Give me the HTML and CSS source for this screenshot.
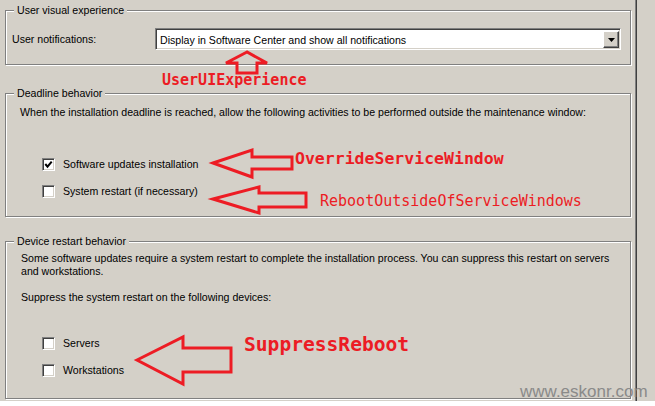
FILE: index.html
```html
<!DOCTYPE html>
<html lang="en">
<head>
    <meta charset="UTF-8">
    <title>Software Updates - User Experience</title>
    <link rel="stylesheet" href="styles.css">
</head>
<body>

    <div class="dialog">
        <div class="panel">

            <!-- User visual experience -->
            <fieldset class="group group-visual">
                <legend>User visual experience</legend>
                <div class="field-row">
                    <span class="field-label">User notifications:</span>
                    <div class="combo">
                        <span class="combo-value">Display in Software Center and show all notifications</span>
                        <span class="combo-button">
                            <svg width="7" height="4" viewBox="0 0 7 4"><polygon points="0,0 7,0 3.5,4" fill="#000"/></svg>
                        </span>
                    </div>
                </div>
            </fieldset>

            <!-- Deadline behavior -->
            <fieldset class="group group-deadline">
                <legend>Deadline behavior</legend>
                <p class="note">When the installation deadline is reached, allow the following activities to be performed outside the maintenance window:</p>
                <div class="options">
                    <label class="option">
                        <span class="check">
                            <svg width="11" height="11" viewBox="0 0 11 11"><polyline points="2.3,5 4.5,7.6 8.7,2.6" fill="none" stroke="#000" stroke-width="2"/></svg>
                        </span>
                        Software updates installation
                    </label>
                    <label class="option"><span class="check"></span>System restart (if necessary)</label>
                </div>
            </fieldset>

            <!-- Device restart behavior -->
            <fieldset class="group group-restart">
                <legend>Device restart behavior</legend>
                <p class="note">Some software updates require a system restart to complete the installation process. You can suppress this restart on servers<br>and workstations.</p>
                <p class="note note-gap">Suppress the system restart on the following devices:</p>
                <div class="options">
                    <label class="option"><span class="check"></span>Servers</label>
                    <label class="option"><span class="check"></span>Workstations</label>
                </div>
            </fieldset>

        </div>

        <!-- Red notes drawn over the dialog -->
        <svg class="notes" width="655" height="401" viewBox="0 0 655 401">
            <g class="arrow">
                <polygon points="247,52 226,63 237,63 237,73 257,73 257,63 267,63"/>
                <polygon points="213,163 252,150 252,157 292,157 292,169 252,169 252,177"/>
                <polygon points="213,199 259,187 259,193 306,193 306,207 259,207 259,213"/>
                <polygon points="137,360 183,337 183,348 231,348 231,372 183,372 183,384"/>
            </g>
            <text class="tag tag-bold" x="162" y="85" font-size="15">UserUIExperience</text>
            <text class="tag tag-bold" x="295" y="164" font-size="16.5">OverrideServiceWindow</text>
            <text class="tag" x="320" y="206" font-size="15">RebootOutsideOfServiceWindows</text>
            <text class="tag tag-bold" x="244" y="351" font-size="19.6">SuppressReboot</text>
            <text class="watermark" x="520" y="397">www.eskonr.com</text>
        </svg>
    </div>

</body>
</html>
```

FILE: styles.css
```css
* {
    margin: 0;
    padding: 0;
    box-sizing: border-box;
}

body {
    background: #fff;
    font-family: "Liberation Sans", Arial, sans-serif;
    font-size: 10.6px;
    color: #000;
}

/* Dialog window */
.dialog {
    position: relative;
    width: 655px;
    height: 401px;
    background-color: #d4d0c8;
    box-shadow: 0 1px 3px rgba(0, 0, 0, 0.55);
}

.panel {
    width: 636px;
    height: 100%;
    padding-top: 4px;
    border-right: 1px solid #808080;
    box-shadow: 1px 0 0 #404040;
}

/* Group boxes (etched border) */
.group {
    width: 626px;
    margin-left: 5px;
    border: 1px solid #808080;
    box-shadow: 1px 1px 0 #fff, inset 1px 1px 0 #fff;
    padding: 0 0 0 6px;
    min-inline-size: 0;
}

.group legend {
    line-height: 13px;
    padding: 0 3px;
    margin-left: 2px;
    background-color: #d4d0c8;
}

.group-visual {
    padding-top: 11px;
    padding-bottom: 14px;
    margin-bottom: 22px;
}

.group-deadline {
    padding-top: 6px;
    padding-bottom: 18px;
    margin-bottom: 18px;
}

.group-restart {
    height: 164px;
    padding-top: 4px;
}

/* Combo box row */
.field-row {
    display: flex;
    align-items: center;
}

.field-label {
    width: 143px;
}

.combo {
    display: flex;
    align-items: center;
    width: 466px;
    height: 22px;
    padding: 2px 1px 1px 4px;
    background-color: #fff;
    border: 1px solid;
    border-color: #808080 #fff #fff #808080;
    box-shadow: inset 1px 1px 0 #404040, inset -1px -1px 0 #d4d0c8;
}

.combo-value {
    flex: 1;
    white-space: nowrap;
}

.combo-button {
    display: flex;
    align-items: center;
    justify-content: center;
    width: 16px;
    height: 17px;
    background-color: #d4d0c8;
    border: 1px solid;
    border-color: #fff #404040 #404040 #fff;
    box-shadow: inset -1px -1px 0 #808080;
}

/* Text and check boxes */
.note {
    line-height: 13px;
}

.group-deadline .note {
    margin-left: 8px;
}

.group-restart .note {
    margin-left: 9px;
}

.note-gap {
    margin-top: 13px;
}

.options {
    display: flex;
    flex-direction: column;
    gap: 14px;
    margin-left: 30px;
}

.group-deadline .options {
    margin-top: 39px;
}

.group-restart .options {
    margin-top: 33px;
}

.option {
    display: flex;
    align-items: center;
    height: 13px;
    line-height: 13px;
    white-space: nowrap;
}

.check {
    display: flex;
    width: 13px;
    height: 13px;
    margin-right: 8px;
    background-color: #fff;
    border: 1px solid;
    border-color: #808080 #fff #fff #808080;
    box-shadow: inset 1px 1px 0 #404040, inset -1px -1px 0 #d4d0c8;
}

/* Red notes layer */
.notes {
    position: absolute;
    top: 0;
    left: 0;
    pointer-events: none;
}

.arrow polygon {
    fill: none;
    stroke: #ed1c24;
    stroke-width: 3;
    stroke-linejoin: miter;
}

.tag {
    font-family: "DejaVu Sans Mono", monospace;
    fill: #ec1c24;
}

.tag-bold {
    font-weight: bold;
}

.watermark {
    font-family: "Liberation Sans", Arial, sans-serif;
    font-size: 17px;
    fill: #8a8a8a;
}
```
